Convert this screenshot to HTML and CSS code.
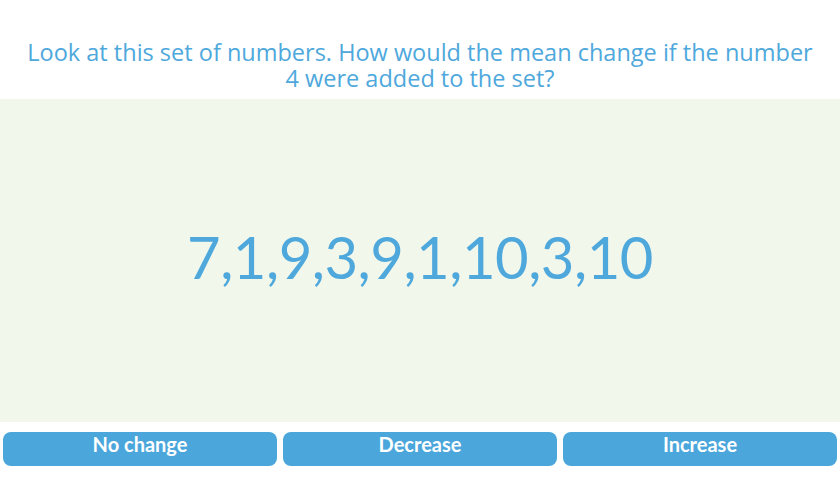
FILE: index.html
```html
<!DOCTYPE html>
<html>
<head>
    <title>Mean change</title>
    <link rel="stylesheet" href="styles.css">
</head>
<body>
    <div class="question">
        <p>Look at this set of numbers. How would the mean change if the number 4 were added to the set?</p>
    </div>
    <div class="board">
        <div class="numbers">7,1,9,3,9,1,10,3,10</div>
    </div>
    <div class="answers">
        <button class="answer">No change</button>
        <button class="answer">Decrease</button>
        <button class="answer">Increase</button>
    </div>
</body>
</html>
```

FILE: styles.css
```css
body {
    margin: 0;
    background: white;
    font-family: "Open Sans", sans-serif;
}
.question {
    height: 99px;
    display: flex;
    align-items: flex-end;
    justify-content: center;
    padding: 0 25px;
    box-sizing: border-box;
}
.question p {
    margin: 0 0 8px;
    text-align: center;
    color: #4ea8dc;
    font-size: 23.5px;
    line-height: 26px;
}
.board {
    height: 323px;
    background: #f2f7ec;
    display: flex;
    align-items: center;
    justify-content: center;
}
.numbers {
    font-family: Lato, sans-serif;
    font-size: 58px;
    color: #4ea8dc;
    letter-spacing: -0.5px;
    margin-bottom: 8px;
}
.answers {
    display: flex;
    gap: 6px;
    padding: 10px 3px 0;
}
.answer {
    flex: 1;
    height: 34px;
    border: none;
    border-radius: 8px;
    background: #4aa6db;
    color: white;
    font-family: Lato, sans-serif;
    font-weight: bold;
    font-size: 20px;
    padding: 0 0 10px;
    cursor: pointer;
}
```
